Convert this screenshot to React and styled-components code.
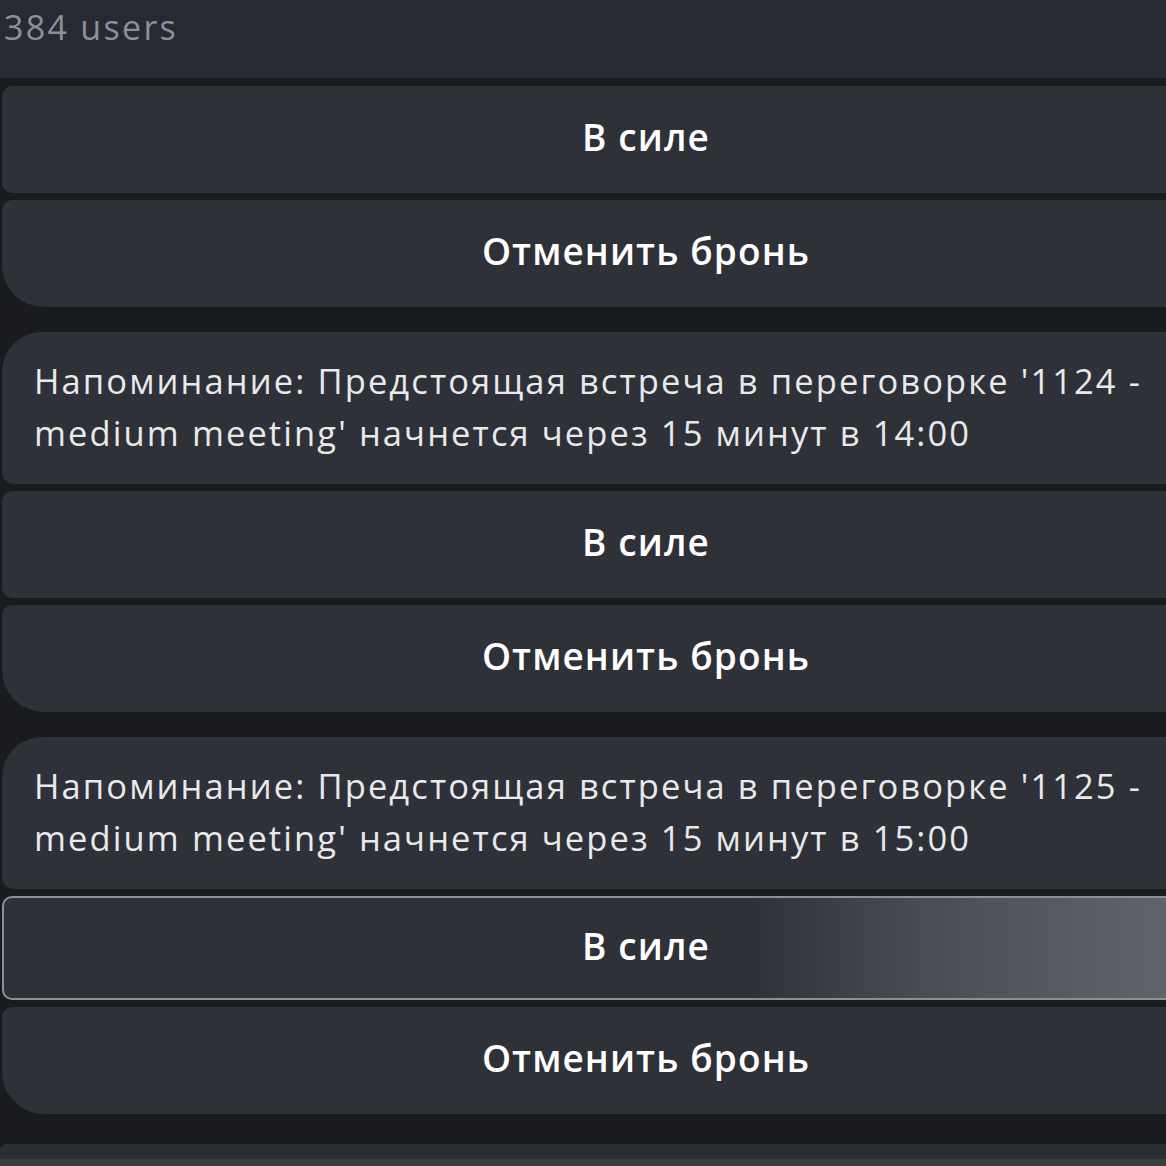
import React from 'react'
import styled, { createGlobalStyle } from 'styled-components'

const Global = createGlobalStyle`
  html, body {
    margin: 0;
    padding: 0;
    background: #1a1b1f;
    overflow: hidden;
  }
  body {
    font-family: "Open Sans", "Noto Sans", sans-serif;
  }
`

const Page = styled.div`
  width: 1166px;
  height: 1166px;
  overflow: hidden;
  display: flex;
  flex-direction: column;
  background: #1a1b1f;
`

const Header = styled.div`
  height: 78px;
  flex-shrink: 0;
  background: #272a31;
  padding-left: 4px;
  font-size: 34px;
  line-height: 54px;
  letter-spacing: 2.3px;
  color: #8b9098;
`

const Feed = styled.div`
  width: 1288px;
  display: flex;
  flex-direction: column;
  padding: 8px 0 0 2px;
`

const Group = styled.div`
  display: flex;
  flex-direction: column;
  gap: 7px;
  margin-bottom: 25px;
`

const Bubble = styled.div`
  background: #2e3138;
  border-radius: 40px 40px 12px 12px;
  padding: 23px 32px 25px;
  font-size: 34.5px;
  line-height: 52px;
  letter-spacing: 2.1px;
  color: #e8e9ea;
`

const KeyButton = styled.div`
  height: ${p => (p.$active ? 104 : 107)}px;
  box-sizing: border-box;
  display: flex;
  align-items: center;
  justify-content: center;
  padding-bottom: 6px;
  background: ${p =>
    p.$active
      ? 'linear-gradient(90deg, #2e3138 0%, #2e3138 58%, #4a4d54 72%, #60636a 90%)'
      : '#2e3138'};
  border: ${p => (p.$active ? '2px solid #8c8f95' : 'none')};
  border-radius: ${p => (p.$last ? '10px 10px 10px 42px' : '10px')};
  color: #ffffff;
  font-size: 37px;
  font-weight: 600;
  letter-spacing: 1.1px;
`

const Footer = styled.div`
  margin-top: 5px;
  height: 15px;
  flex-shrink: 0;
  background: #2b2e35;
  border-radius: 6px 0 0 0;
`

const Bottom = styled.div`
  flex: 1;
  background: #3c3d41;
`

const messages = [
  { room: '1124', time: '14:00' },
  { room: '1125', time: '15:00' }
]

const Keyboard = ({ active }) => (
  <>
    <KeyButton $active={active}>В силе</KeyButton>
    <KeyButton $last>Отменить бронь</KeyButton>
  </>
)

const App = () => {
  return (
    <Page>
      <Global />
      <Header>384 users</Header>
      <Feed>
        <Group>
          <Keyboard />
        </Group>
        {messages.map((m, i) => (
          <Group key={m.room}>
            <Bubble>
              Напоминание: Предстоящая встреча в переговорке '{m.room} - medium meeting' начнется через 15 минут в {m.time}
            </Bubble>
            <Keyboard active={i === messages.length - 1} />
          </Group>
        ))}
      </Feed>
      <Footer />
      <Bottom />
    </Page>
  )
}

export default App
